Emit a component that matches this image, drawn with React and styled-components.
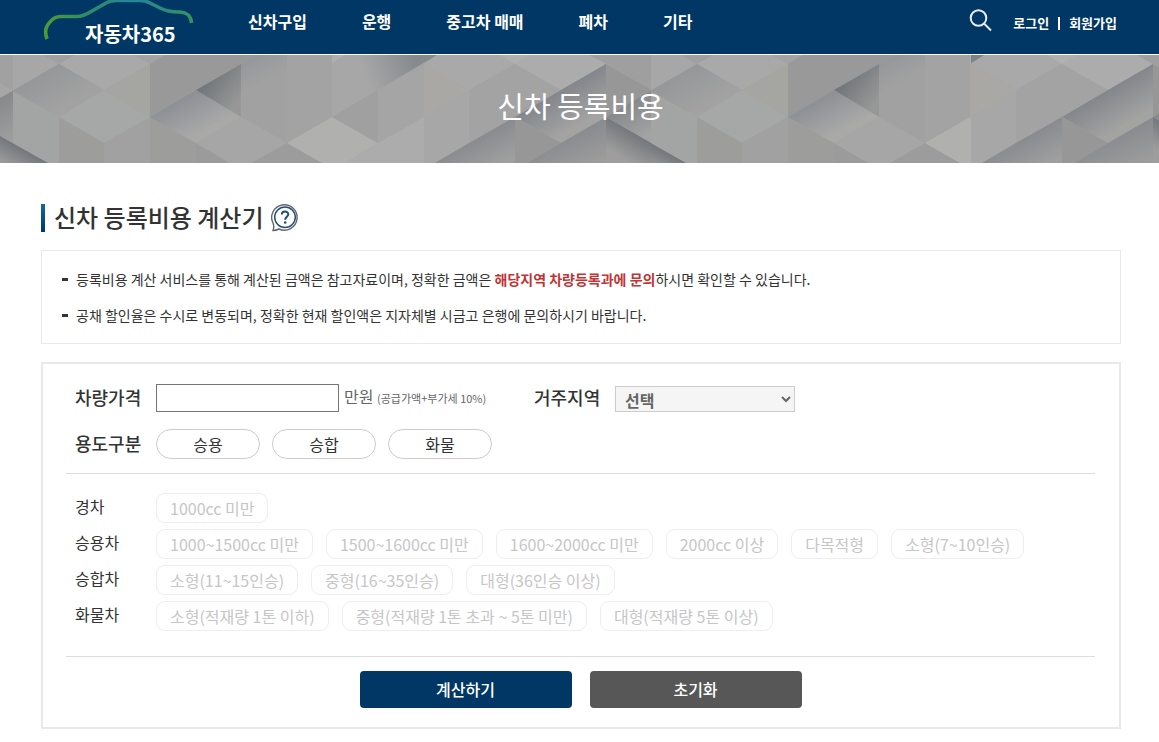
import React from "react";
import styled, { createGlobalStyle, css } from "styled-components";

const GlobalStyle = createGlobalStyle`
  * { box-sizing: border-box; }
  body {
    margin: 0;
    background: #fff;
    color: #333;
    font-family: "Noto Sans CJK KR", "Noto Sans", sans-serif;
    font-size: 16px;
  }
  button, input, select { font-family: inherit; margin: 0; }
  a { color: inherit; text-decoration: none; }
`;

const Header = styled.header`
  display: flex;
  align-items: flex-start;
  height: 55px;
  padding: 0 42px 0 41px;
  background: #003764;
  border-bottom: 1px solid #fff;
  color: #fff;
`;

const LogoLink = styled.a`
  display: block;
  width: 156px;
  height: 54px;
  margin-right: 51px;
`;

const Nav = styled.nav`
  display: flex;
  gap: 55px;
  font-weight: 700;
  line-height: 24px;
  padding-top: 9px;
  white-space: nowrap;
`;

const Utility = styled.div`
  display: flex;
  align-items: center;
  margin-left: auto;
  padding-top: 8px;
  font-size: 13px;
  font-weight: 700;
  line-height: 30px;
  white-space: nowrap;
`;

const SearchButton = styled.button`
  display: flex;
  align-self: flex-start;
  width: 24px;
  height: 24px;
  padding: 0;
  margin-right: 20px;
  border: 0;
  background: none;
`;

const Divider = styled.span`
  width: 2px;
  height: 13px;
  margin: 0 9px;
  background: #fff;
`;

const Hero = styled.section`
  position: relative;
  display: flex;
  justify-content: center;
  height: 108px;
  overflow: hidden;
  background: #a3a3a3;
`;

const HeroArt = styled.svg`
  position: absolute;
  inset: 0;
  width: 100%;
  height: 100%;
`;

const HeroTitle = styled.h1`
  position: relative;
  margin: 0;
  padding-left: 2px;
  color: #fff;
  font-size: 29px;
  font-weight: 400;
  line-height: 100px;
`;

const Main = styled.main`
  padding: 41px 38px 13px 41px;
`;

const TitleRow = styled.div`
  display: flex;
  align-items: center;
  gap: 7px;
  height: 28px;
`;

const TitleBar = styled.span`
  width: 4px;
  height: 28px;
  margin-right: 2px;
  background: linear-gradient(#1568a8, #003764);
`;

const Title = styled.h2`
  margin: 0;
  padding-bottom: 2px;
  font-size: 24px;
  font-weight: 500;
  line-height: 26px;
`;

const HelpButton = styled.button`
  display: flex;
  width: 28px;
  height: 28px;
  padding: 0;
  border: 0;
  background: none;
`;

const Notices = styled.ul`
  margin: 18px 0;
  padding: 10px 20px;
  border: 1px solid #e9e9e9;
  list-style: none;
  font-size: 14px;
  line-height: 36px;
`;

const Notice = styled.li`
  display: flex;
  align-items: center;
  gap: 8px;
  &::before {
    content: "";
    width: 6px;
    height: 3px;
    background: #333;
  }
  strong { color: #c03535; }
`;

const Form = styled.form`
  padding: 20px 24px 19px 23px;
  border: 2px solid #e9e9e9;
`;

const Row = styled.div`
  display: flex;
  align-items: center;
  padding-left: 9px;
`;

const FieldRow = styled(Row)`
  height: 28px;
  margin-bottom: 17px;
`;

const labelStyle = css`
  width: 81px;
  flex: none;
  padding-bottom: 2px;
  line-height: 26px;
  white-space: nowrap;
`;

const FieldLabel = styled.label`
  ${labelStyle}
  font-size: 18px;
  font-weight: 500;
`;

const GroupLabel = styled(FieldLabel).attrs({ as: "span" })``;

const PriceInput = styled.input`
  width: 183px;
  height: 28px;
  border: 1px solid #767676;
  background: #fff;
`;

const Unit = styled.span`
  width: 195px;
  padding: 0 0 2px 5px;
  color: #666;
  line-height: 26px;
  white-space: nowrap;
  small { font-size: 11px; }
`;

const RegionSelect = styled.select`
  width: 180px;
  height: 26px;
  align-self: flex-end;
  padding: 0 0 2px 5px;
  border: 1px solid #ccc;
  border-radius: 0;
  background: #f5f5f5;
  color: #666;
  font-size: 16px;
  font-weight: 700;
`;

const Options = styled.div`
  display: flex;
  gap: ${(p) => p.$gap}px;
`;

const UsageButton = styled.button`
  width: 104px;
  height: 30px;
  padding: 0;
  border: 1px solid #ccc;
  border-radius: 15px;
  background: #fff;
  color: #333;
  font-size: 16px;
  line-height: 28px;
`;

const TypeGrid = styled.div`
  display: grid;
  gap: 6px;
  margin: 14px 0 25px;
  padding: 19px 0 0;
  border-top: 1px solid #ddd;
`;

const TypeLabel = styled.span`
  ${labelStyle}
  align-self: flex-start;
`;

const TypeButton = styled.button`
  height: 30px;
  padding: 0 13px;
  border: 1px solid #eee;
  border-radius: 9px;
  background: #fff;
  color: #c6c6c6;
  font-size: 16px;
  line-height: 28px;
  white-space: nowrap;
`;

const Actions = styled.div`
  display: flex;
  justify-content: center;
  gap: 18px;
  padding-top: 14px;
  border-top: 1px solid #ddd;
`;

const ActionButton = styled.button`
  width: 212px;
  height: 37px;
  padding: 0;
  border: 0;
  border-radius: 4px;
  background: ${(p) => (p.$primary ? "#003764" : "#575757")};
  color: #fff;
  font-size: 16px;
  font-weight: 500;
  line-height: 37px;
`;

const menu = ["신차구입", "운행", "중고차 매매", "폐차", "기타"];
const usages = ["승용", "승합", "화물"];
const types = [
  ["경차", ["1000cc 미만"]],
  ["승용차", ["1000~1500cc 미만", "1500~1600cc 미만", "1600~2000cc 미만", "2000cc 이상", "다목적형", "소형(7~10인승)"]],
  ["승합차", ["소형(11~15인승)", "중형(16~35인승)", "대형(36인승 이상)"]],
  ["화물차", ["소형(적재량 1톤 이하)", "중형(적재량 1톤 초과 ~ 5톤 미만)", "대형(적재량 5톤 이상)"]],
];

// Shaded facets: id, start point, end point, dark colour, light colour
const shades = [
  ["s1", 6, 39, 30, 80, "#88898b", "#a0a1a1"],
  ["s2", 24, 95, 12, 116, "#74787c", "#a0a0a0"],
  ["s3", 178, 46, 196, 80, "#8d9095", "#a9a9a8"],
  ["s4", 204, 30, 234, 52, "#72777b", "#979797"],
  ["s5", 248, 3, 262, 28, "#94979a", "#a1a1a1"],
  ["s6", 416, 6, 366, 24, "#858a8e", "#a7a7a7"],
  ["s7", 552, 40, 572, 74, "#83868b", "#a3a3a2"],
  ["s8", 490, 76, 506, 106, "#898b8f", "#9f9f9f"],
  ["s9", 588, 72, 602, 104, "#898b8f", "#9c9c9c"],
  ["s10", 36, 22, 56, 57, "#959799", "#a2a2a2"],
  ["s11", 622, 71, 608, 95, "#74787c", "#9e9e9e"],
  ["s12", 622, 53, 640, 84, "#88898b", "#a1a2a2"],
];

const facets = [
  ["0,0 59,0 59,9 0,43", "#a6a6a6"],
  ["0,0 13,0 13,36 0,28", "#a1a1a1"],
  ["13,0 43,0 59,9 13,36", "#a7a7a7"],
  ["43,0 75,0 59,9", "#a0a0a0"],
  ["59,9 75,0 134,0 150,9 104,35", "#a9a9a9"],
  ["134,0 165,0 150,9", "#a3a3a3"],
  ["59,9 104,35 59,62 13,88 0,81 0,43", "url(#s10)"],
  ["0,43 13,36 13,88 0,81", "url(#s1)"],
  ["13,36 59,62 59,108 48,108 13,88", "#a3a5a4"],
  ["13,36 59,9 104,35 59,62", "url(#s10)"],
  ["0,81 48,108 0,108", "url(#s2)"],
  ["59,62 104,35 150,62 104,88", "#a5a8a6"],
  ["59,62 104,88 104,108 59,108", "#9d9d9c"],
  ["104,35 150,9 150,62", "#a5a5a2"],
  ["150,9 165,0 256,0 150,62", "#999999"],
  ["104,88 150,62 150,108 104,108", "#a1a1a1"],
  ["150,62 196,88 196,108 150,108", "#9d9d9c"],
  ["196,88 230,108 196,108", "#9b9b9b"],
  ["196,35 241,62 196,88 150,62", "url(#s3)"],
  ["196,35 241,9 241,62", "url(#s4)"],
  ["241,9 256,0 287,0 287,88 241,62", "url(#s5)"],
  ["196,88 241,62 287,88 252,108 230,108", "#a6a6a6"],
  ["252,108 287,88 322,108", "#9c9c9c"],
  ["287,0 332,0 332,62 287,88", "#a3a3a3"],
  ["332,0 437,0 332,62", "url(#s6)"],
  ["332,0 345,0 332,8", "#b0b0ae"],
  ["332,62 378,88 345,108 322,108 287,88", "#b0b0ae"],
  ["332,62 378,35 378,88", "#a0a0a0"],
  ["378,35 424,9 424,62 378,88", "#a5a5a5"],
  ["345,108 378,88 424,62 424,108", "#acacac"],
  ["424,9 469,35 424,62", "#aaa8a5"],
  ["424,9 437,0 500,0 515,9 469,35", "#a9a9a9"],
  ["424,62 469,35 469,88 435,108 424,108", "#a7a7a7"],
  ["469,35 515,9 561,35 469,88", "#a3a3a3"],
  ["500,0 590,0 606,9 561,35 515,9", "#acacac"],
  ["500,0 530,0 515,9", "#b0b0ae"],
  ["561,35 606,9 606,62 561,88 515,62", "url(#s7)"],
  ["469,88 515,62 515,108 435,108", "url(#s8)"],
  ["515,62 561,88 527,108 515,108", "#979797"],
  ["561,88 606,62 606,108 527,108", "url(#s9)"],
  ["606,9 652,35 606,62", "#979797"],
  ["590,0 652,0 652,35 606,9", "#9f9f9f"],
  ["606,62 652,35 652,88", "url(#s12)"],
  ["606,62 686,108 606,108", "url(#s11)"],
];

function HeroPattern() {
  return (
    <HeroArt viewBox="0 0 1159 108" preserveAspectRatio="xMidYMid slice" aria-hidden="true">
      <defs>
        {shades.map(([id, x1, y1, x2, y2, a, b]) => (
          <linearGradient key={id} id={id} gradientUnits="userSpaceOnUse" x1={x1} y1={y1} x2={x2} y2={y2}>
            <stop offset="0" stopColor={a} />
            <stop offset="1" stopColor={b} />
          </linearGradient>
        ))}
        <g id="facets">
          {facets.map(([points, fill]) => (
            <polygon key={points} points={points} fill={fill} />
          ))}
        </g>
        <clipPath id="first"><rect x="0" y="0" width="652" height="108" /></clipPath>
        <clipPath id="middle"><rect x="13" y="0" width="320" height="108" /></clipPath>
        <clipPath id="end"><rect x="424" y="0" width="262" height="108" /></clipPath>
      </defs>
      <g clipPath="url(#first)"><use href="#facets" /></g>
      <g transform="translate(638 0)"><g clipPath="url(#middle)"><use href="#facets" /></g></g>
      <g transform="translate(547 0)"><g clipPath="url(#end)"><use href="#facets" /></g></g>
      <polygon points="971,0 984,0 971,8" fill="#7d8286" />
    </HeroArt>
  );
}

function Logo() {
  return (
    <svg width="156" height="54" viewBox="0 0 156 54" role="img" aria-label="자동차365">
      <defs>
        <linearGradient id="car" gradientUnits="userSpaceOnUse" x1="3" x2="153" y1="0" y2="0">
          <stop offset="0" stopColor="#4f9a35" />
          <stop offset="0.3" stopColor="#2f8a6c" />
          <stop offset="0.6" stopColor="#24859a" />
          <stop offset="1" stopColor="#35945f" />
        </linearGradient>
      </defs>
      <path
        d="M6 39C3 31 5 26 9 22C12 18 15 16.500 20 16.500H36C42 16.500 46 14 51 11L66 2.500C69 1 71 .5 75 .5H99C103 .5 106 1.500 109 3L119 8C125 11 130 12 138 12C147 12.500 150 16 150.500 23"
        fill="none"
        stroke="url(#car)"
        strokeWidth="3.600"
      />
      <text x="44" y="42" fill="#fff" fontSize="20" fontWeight="700">자동차365</text>
    </svg>
  );
}

export default function App() {
  return (
    <>
      <GlobalStyle />
      <Header>
        <LogoLink href="#"><Logo /></LogoLink>
        <Nav>
          {menu.map((m) => <a key={m} href="#">{m}</a>)}
        </Nav>
        <Utility>
          <SearchButton type="button" aria-label="검색">
            <svg width="24" height="24" viewBox="0 0 24 24" fill="none" stroke="#e8edf2" strokeWidth="2">
              <circle cx="9.500" cy="10" r="7.800" />
              <path d="M15 15.500L22 22.500" />
            </svg>
          </SearchButton>
          <a href="#">로그인</a>
          <Divider />
          <a href="#">회원가입</a>
        </Utility>
      </Header>
      <Hero>
        <HeroPattern />
        <HeroTitle>신차 등록비용</HeroTitle>
      </Hero>
      <Main>
        <TitleRow>
          <TitleBar />
          <Title>신차 등록비용 계산기</Title>
          <HelpButton type="button" aria-label="도움말">
            <svg width="28" height="28" viewBox="0 0 28 28" fill="none">
              <path d="M2 26.500C3 24 3 22 2.200 19.500A12.700 12.700 0 1 1 8 25C6 26 4 26.500 2 26.500Z" stroke="#666" strokeWidth="1.400" />
              <circle cx="14" cy="13.200" r="10.300" stroke="#1f4f7c" strokeWidth="1.500" />
              <path d="M10.800 10.500C10.800 6.500 17.300 6.600 17.300 10.300C17.300 12.700 14.200 13 14.200 15.800" stroke="#1f4f7c" strokeWidth="2" />
              <circle cx="14.200" cy="18.500" r="1.300" fill="#1f4f7c" />
            </svg>
          </HelpButton>
        </TitleRow>
        <Notices>
          <Notice>
            <span>
              등록비용 계산 서비스를 통해 계산된 금액은 참고자료이며, 정확한 금액은 <strong>해당지역 차량등록과에 문의</strong>하시면 확인할 수 있습니다.
            </span>
          </Notice>
          <Notice>
            <span>공채 할인율은 수시로 변동되며, 정확한 현재 할인액은 지자체별 시금고 은행에 문의하시기 바랍니다.</span>
          </Notice>
        </Notices>
        <Form onSubmit={(e) => e.preventDefault()}>
          <FieldRow>
            <FieldLabel htmlFor="price">차량가격</FieldLabel>
            <PriceInput id="price" type="text" />
            <Unit>만원 <small>(공급가액+부가세 10%)</small></Unit>
            <FieldLabel htmlFor="region">거주지역</FieldLabel>
            <RegionSelect id="region" defaultValue="">
              <option value="">선택</option>
            </RegionSelect>
          </FieldRow>
          <Row role="group" aria-label="용도구분">
            <GroupLabel>용도구분</GroupLabel>
            <Options $gap={12}>
              {usages.map((u) => <UsageButton key={u} type="button">{u}</UsageButton>)}
            </Options>
          </Row>
          <TypeGrid>
            {types.map(([label, options]) => (
              <Row key={label} role="group" aria-label={label}>
                <TypeLabel>{label}</TypeLabel>
                <Options $gap={13}>
                  {options.map((o) => <TypeButton key={o} type="button" disabled>{o}</TypeButton>)}
                </Options>
              </Row>
            ))}
          </TypeGrid>
          <Actions>
            <ActionButton type="submit" $primary>계산하기</ActionButton>
            <ActionButton type="reset">초기화</ActionButton>
          </Actions>
        </Form>
      </Main>
    </>
  );
}
